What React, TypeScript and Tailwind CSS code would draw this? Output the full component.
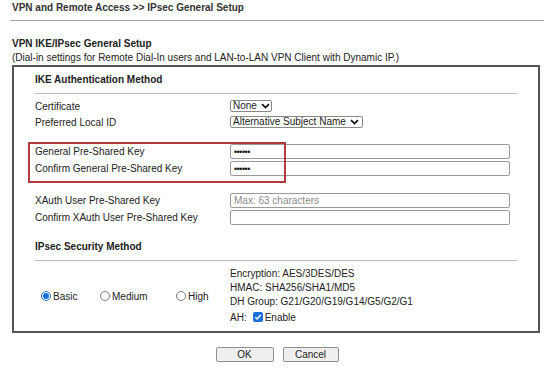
import React from "react";

function Chevron() {
  return (
    <svg width="9" height="6" viewBox="0 0 9 6" className="ml-[4px]">
      <path d="M1 1.2l3.5 3.3 3.5-3.3" fill="none" stroke="#111" strokeWidth="1.7" />
    </svg>
  );
}

function Select({ value, width }: { value: string; width: string }) {
  return (
    <div
      className={`flex items-center h-[12px] ${width} border border-[#8a8a8a] rounded-[2px] pl-[2px] leading-[10px]`}
    >
      <span>{value}</span>
      <Chevron />
    </div>
  );
}

function TextBox({ value, placeholder }: { value?: string; placeholder?: string }) {
  return (
    <div className="flex items-center w-[280px] h-[15px] border border-[#9a9a9a] rounded-[2px] pl-[3px] leading-[10px]">
      {value ? (
        <span className="text-[9px] tracking-[-0.5px] text-[#111]">{value}</span>
      ) : (
        <span className="text-[#8a8a8a]">{placeholder}</span>
      )}
    </div>
  );
}

function Row({ label, h, children }: { label: string; h: string; children: React.ReactNode }) {
  return (
    <div className={`flex items-center ${h}`}>
      <div className="w-[195px] shrink-0">{label}</div>
      {children}
    </div>
  );
}

function Radio({ checked, label, width }: { checked?: boolean; label: string; width: string }) {
  return (
    <div className={`flex items-center ${width}`}>
      {checked ? (
        <span className="w-[10px] h-[10px] rounded-full border border-[#1a6fd8] flex items-center justify-center">
          <span className="w-[6px] h-[6px] rounded-full bg-[#1a6fd8]" />
        </span>
      ) : (
        <span className="w-[10px] h-[10px] rounded-full border border-[#7a7a7a]" />
      )}
      <span className="ml-[2px]">{label}</span>
    </div>
  );
}

export default function App() {
  return (
    <div className="w-[554px] h-[377px] bg-white text-[10px] text-[#222] font-['Liberation_Sans',Arial,sans-serif]">
      <div className="h-[20px] pl-[12px] font-bold text-[#333] leading-[16px]">
        VPN and Remote Access &gt;&gt; IPsec General Setup
      </div>
      <div className="mx-[10px] h-px bg-[#a0a0a0]" />

      <div className="mt-[16px] pl-[12px] font-bold leading-[14px]">VPN IKE/IPsec General Setup</div>
      <div className="pl-[12px] leading-[13px]">
        (Dial-in settings for Remote Dial-In users and LAN-to-LAN VPN Client with Dynamic IP.)
      </div>

      {/* main panel */}
      <div className="mt-[1px] ml-[12px] w-[528px] border-2 border-[#555]">
        <div className="px-[21px]">
          <div className="pt-[6px] font-bold leading-[14px]">IKE Authentication Method</div>
          <div className="mt-[6px] h-px bg-[#bdbdbd]" />

          <div className="mt-[4px]">
            <Row label="Certificate" h="h-[16px]">
              <Select value="None" width="w-[42px]" />
            </Row>
            <Row label="Preferred Local ID" h="h-[16px]">
              <Select value="Alternative Subject Name" width="w-[133px]" />
            </Row>
          </div>

          <div className="relative mt-[12px] pt-[1px] pb-[6px]">
            <Row label="General Pre-Shared Key" h="h-[17px]">
              <TextBox value="••••••" />
            </Row>
            <Row label="Confirm General Pre-Shared Key" h="h-[17px]">
              <TextBox value="••••••" />
            </Row>
            <div className="absolute top-0 bottom-0 left-[-7px] w-[258px] border-2 border-[#b03a3e]" />
          </div>

          <div className="mt-[9px]">
            <Row label="XAuth User Pre-Shared Key" h="h-[17px]">
              <TextBox placeholder="Max: 63 characters" />
            </Row>
            <Row label="Confirm XAuth User Pre-Shared Key" h="h-[17px]">
              <TextBox />
            </Row>
          </div>

          <div className="mt-[14px] font-bold leading-[14px]">IPsec Security Method</div>
          <div className="mt-[6px] h-px bg-[#bdbdbd]" />

          <div className="flex items-center pt-[6px] pb-[6px]">
            <div className="w-[195px] shrink-0 flex items-center pl-[6px]">
              <Radio checked label="Basic" width="w-[59px]" />
              <Radio label="Medium" width="w-[76px]" />
              <Radio label="High" width="w-[40px]" />
            </div>
            <div>
              <div className="leading-[14px]">Encryption: AES/3DES/DES</div>
              <div className="leading-[14px]">HMAC: SHA256/SHA1/MD5</div>
              <div className="leading-[14px]">DH Group: G21/G20/G19/G14/G5/G2/G1</div>
              <div className="flex items-center h-[16px]">
                <span>AH:</span>
                <span className="ml-[6px] w-[10px] h-[10px] rounded-[2px] bg-[#1a6fd8] flex items-center justify-center">
                  <svg width="8" height="8" viewBox="0 0 8 8">
                    <path d="M1.3 4.2l1.8 1.8 3.6-4" fill="none" stroke="#fff" strokeWidth="1.5" />
                  </svg>
                </span>
                <span className="ml-[2px]">Enable</span>
              </div>
            </div>
          </div>
        </div>
      </div>

      <div className="mt-[14px] flex justify-center gap-[9px]">
        <button className="w-[58px] h-[15px] bg-[#efefef] border border-[#8f8f8f] rounded-[2px] text-[10px] leading-[13px]">
          OK
        </button>
        <button className="w-[56px] h-[15px] bg-[#efefef] border border-[#8f8f8f] rounded-[2px] text-[10px] leading-[13px]">
          Cancel
        </button>
      </div>
    </div>
  );
}
